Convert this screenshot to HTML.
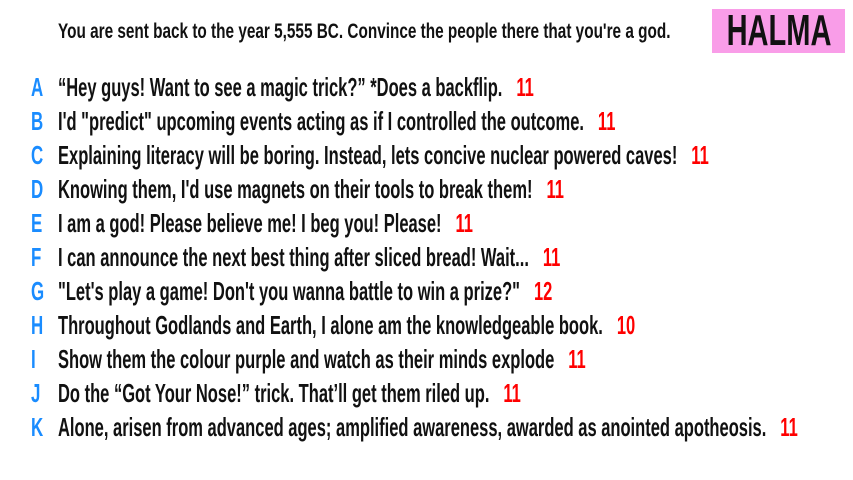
<!DOCTYPE html>
<html><head><meta charset="utf-8"><style>
html,body{margin:0;padding:0;background:#fff;}
body{width:853px;height:480px;position:relative;overflow:hidden;font-family:"Liberation Sans",sans-serif;color:#111;}
.q{position:absolute;left:58px;top:20px;font-size:21px;font-weight:bold;white-space:nowrap;transform:scaleX(0.73);transform-origin:0 0;}
.h{position:absolute;left:712px;top:9px;width:133px;height:44px;background:#f99de8;}
.h span{position:absolute;left:67px;top:-1px;font-size:44px;font-weight:bold;line-height:46px;transform:translateX(-50%) scaleX(0.66);white-space:nowrap;}
.r{position:absolute;left:0;height:34px;line-height:34px;font-size:26px;font-weight:bold;white-space:nowrap;}
.l{position:absolute;left:31px;color:#1a8cff;transform:scaleX(0.65);transform-origin:0 0;}
.t{position:absolute;left:58px;transform:scaleX(0.635);transform-origin:0 0;}
.n{color:#f00;margin-left:22px;}
</style></head><body>
<div class="q">You are sent back to the year 5,555 BC. Convince the people there that you're a god.</div>
<div class="h"><span>HALMA</span></div>
<div class="r" style="top:70px"><span class="l">A</span><span class="t">“Hey guys! Want to see a magic trick?” *Does a backflip.<span class="n">11</span></span></div>
<div class="r" style="top:104px"><span class="l">B</span><span class="t">I'd "predict" upcoming events acting as if I controlled the outcome.<span class="n">11</span></span></div>
<div class="r" style="top:138px"><span class="l">C</span><span class="t">Explaining literacy will be boring. Instead, lets concive nuclear powered caves!<span class="n">11</span></span></div>
<div class="r" style="top:172px"><span class="l">D</span><span class="t">Knowing them, I'd use magnets on their tools to break them!<span class="n">11</span></span></div>
<div class="r" style="top:206px"><span class="l">E</span><span class="t">I am a god! Please believe me! I beg you! Please!<span class="n">11</span></span></div>
<div class="r" style="top:240px"><span class="l">F</span><span class="t">I can announce the next best thing after sliced bread! Wait...<span class="n">11</span></span></div>
<div class="r" style="top:274px"><span class="l">G</span><span class="t">"Let's play a game! Don't you wanna battle to win a prize?"<span class="n">12</span></span></div>
<div class="r" style="top:308px"><span class="l">H</span><span class="t">Throughout Godlands and Earth, I alone am the knowledgeable book.<span class="n">10</span></span></div>
<div class="r" style="top:342px"><span class="l">I</span><span class="t">Show them the colour purple and watch as their minds explode<span class="n">11</span></span></div>
<div class="r" style="top:376px"><span class="l">J</span><span class="t">Do the “Got Your Nose!” trick. That’ll get them riled up.<span class="n">11</span></span></div>
<div class="r" style="top:410px"><span class="l">K</span><span class="t">Alone, arisen from advanced ages; amplified awareness, awarded as anointed apotheosis.<span class="n">11</span></span></div>
</body></html>
